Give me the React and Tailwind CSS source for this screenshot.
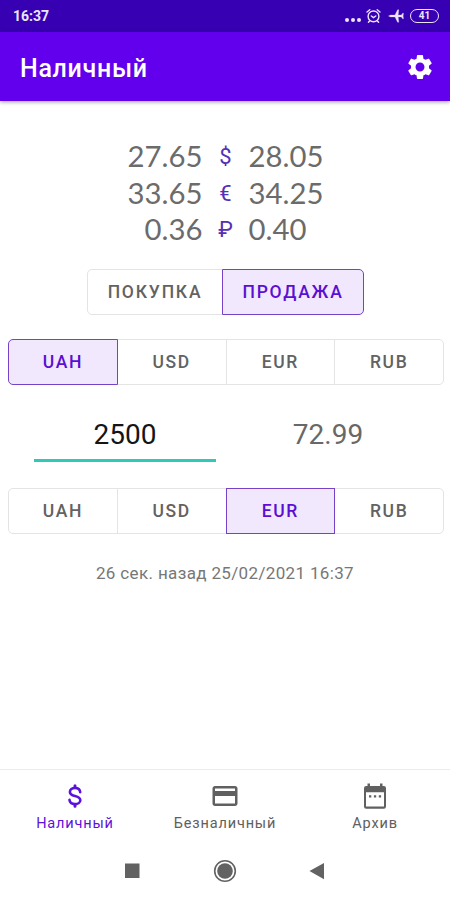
import { clsx } from 'clsx';
import { MdSettings, MdCreditCard } from 'react-icons/md';

const rates = [
  { buy: '27.65', sign: '$', sell: '28.05' },
  { buy: '33.65', sign: '€', sell: '34.25' },
  { buy: '0.36', sign: '₽', sell: '0.40' },
];

const currencies = ['UAH', 'USD', 'EUR', 'RUB'];

function AlarmIcon() {
  return (
    <svg width="15" height="16" viewBox="0 0 15 16" fill="none" stroke="currentColor" strokeWidth="1.4" strokeLinecap="round">
      <circle cx="7.5" cy="8.4" r="5.4" />
      <path d="M1 4 3.8 1.8M14 4 11.2 1.8M5.3 8l2.2 1.6L9.8 8M3.4 13.2l-1 1.1M11.6 13.2l1 1.1" />
    </svg>
  );
}

function PlaneIcon() {
  return (
    <svg width="16" height="14" viewBox="0 0 16 14" fill="currentColor" className="mr-[6px] ml-[7px]">
      <path
        d="M.5 7 2.500 6.100H7L9.600.8h1.200L10.200 6.100h3.200L14.700 4.200h.8L15.100 7l.4 2.800h-.8L13.400 7.900h-3.200l.6 5.300H9.600L7 7.900H2.500Z"
        stroke="currentColor"
        strokeWidth="0.3"
      />
    </svg>
  );
}

function DollarIcon() {
  return (
    <svg width="24" height="24" viewBox="0 0 24 24" fill="none" stroke="currentColor" strokeWidth="2.6" strokeLinecap="round" strokeLinejoin="round">
      <path d="M17.2 8.1C17 5.6 15 4 12 4S6.9 5.6 6.9 7.9C6.9 10.3 8.8 11.2 12 12c3.5.9 5.3 1.9 5.3 4.2 0 2.3-2.2 3.9-5.3 3.9s-5.3-1.7-5.5-4.2" />
      <path d="M12 1.8v1.7M12 20.5v1.7" strokeWidth="3" />
    </svg>
  );
}

function CalendarIcon() {
  return (
    <svg width="24" height="26" viewBox="0 0 24 26" fill="currentColor">
      <path fillRule="evenodd" d="M4.500.5H7V3h10V.5h2.500V3h1.200A2.200 2.200 0 0 1 23 5.200v18.300a2.200 2.200 0 0 1-2.200 2.200H3.200A2.200 2.200 0 0 1 1 23.500V5.200A2.200 2.200 0 0 1 3.200 3h1.300ZM3 9.300v14.200h18V9.300Z" />
      <path d="M6 12.200h2.300v2.300H6zM10.900 12.200h2.300v2.300h-2.300zM15.800 12.200h2.300v2.300h-2.300z" />
    </svg>
  );
}

function ToggleGroup({ items, active, className, itemClass }) {
  return (
    <div className={clsx('flex h-[46px]', className)}>
      {items.map((item, i) => (
        <button
          key={item}
          className={clsx(
            'relative flex items-center justify-center border pt-[3px] text-[17.5px] leading-none font-medium',
            itemClass,
            i > 0 && '-ml-px',
            i === 0 && 'rounded-l-[5px]',
            i === items.length - 1 && 'rounded-r-[5px]',
            item === active
              ? 'z-10 border-[#7443c8] bg-[#f1e8fd] text-[#5a0fd2]'
              : 'border-[#e4e4e4] text-[#626262]'
          )}
        >
          {item}
        </button>
      ))}
    </div>
  );
}

function NavItem({ icon, label, active }) {
  return (
    <button className={clsx('flex flex-1 flex-col items-center', active ? 'text-[#5a12dc]' : 'text-[#606060]')}>
      <span className="flex h-7 items-center justify-center">{icon}</span>
      <span className="mt-[5px] text-[14.5px] leading-[18px] tracking-[0.85px]">{label}</span>
    </button>
  );
}

export default function App() {
  return (
    <div className="flex h-[900px] w-[450px] flex-col overflow-hidden bg-white font-['Roboto',sans-serif]">
      {/* Status bar */}
      <div className="flex h-8 shrink-0 items-center justify-between bg-[#3700b3] pr-[11px] pl-[13px] text-[#ece5fa]">
        <span className="pt-px text-[14px] font-bold">16:37</span>
        <div className="flex items-center">
          <div className="mt-2 mr-[5px] flex gap-[2px]">
            <i className="size-[4px] rounded-full bg-current" />
            <i className="size-[4px] rounded-full bg-current" />
            <i className="size-[4px] rounded-full bg-current" />
          </div>
          <AlarmIcon />
          <PlaneIcon />
          <span className="flex h-[14px] w-[29px] items-center justify-center rounded-full border-[1.5px] border-current text-[10px] leading-none font-bold">
            41
          </span>
        </div>
      </div>

      {/* App bar */}
      <header className="z-10 flex h-[69px] shrink-0 items-center justify-between bg-[#6200ee] pr-[15px] pl-5 text-white shadow-[0_1px_4px_rgba(0,0,0,0.4)]">
        <h1 className="pt-[3px] text-[25px] leading-none font-medium tracking-[0.7px]">Наличный</h1>
        <MdSettings size={30} />
      </header>

      <main className="flex flex-1 flex-col">
        {/* Exchange rates */}
        <div className="mt-[36px] font-['Lato',sans-serif] text-[29.3px] leading-9 text-[#6b6b6b]">
          {rates.map((rate) => (
            <div key={rate.sign} className="grid h-[36.5px] grid-cols-[202.5px_46px_1fr] items-center">
              <span className="text-right">{rate.buy}</span>
              <span className="pt-0.5 text-center font-['Roboto',sans-serif] text-[22px] text-[#5530b5]">{rate.sign}</span>
              <span>{rate.sell}</span>
            </div>
          ))}
        </div>

        <ToggleGroup
          items={['ПОКУПКА', 'ПРОДАЖА']}
          active="ПРОДАЖА"
          className="mt-[22px] ml-[87px] w-[277px]"
          itemClass="tracking-[1.8px] first:w-[136px] last:w-[142px]"
        />
        <ToggleGroup items={currencies} active="UAH" className="mt-6 mr-1.5 ml-2" itemClass="flex-1 tracking-[1.65px]" />

        {/* Amounts */}
        <div className="mt-[25px] grid h-[52px] grid-cols-[34px_182px_22px_180px] text-center text-[28px] leading-[49px]">
          <div className="col-start-2 border-b-[3px] border-[#2fc9b8] text-[#151515]">2500</div>
          <div className="col-start-4 text-[#686868]">72.99</div>
        </div>

        <ToggleGroup items={currencies} active="EUR" className="mt-[26px] mr-1.5 ml-2" itemClass="flex-1 tracking-[1.65px]" />

        <p className="mt-[29px] text-center text-[17px] leading-5 tracking-[0.35px] text-[#777]">26 сек. назад 25/02/2021 16:37</p>
      </main>

      {/* Bottom navigation */}
      <nav className="flex h-[73px] shrink-0 border-t border-[#ececec] pt-3">
        <NavItem active label="Наличный" icon={<DollarIcon />} />
        <NavItem label="Безналичный" icon={<MdCreditCard size={30} />} />
        <NavItem label="Архив" icon={<CalendarIcon />} />
      </nav>

      {/* System buttons */}
      <div className="flex h-[58px] shrink-0 items-center text-[#626262]">
        <svg width="450" height="58" viewBox="0 0 450 58" fill="currentColor">
          <rect x="125" y="21.5" width="14.5" height="14.5" />
          <circle cx="225" cy="29" r="7.8" />
          <circle cx="225" cy="29" r="10.3" fill="none" stroke="currentColor" strokeWidth="1.6" />
          <path d="M309.5 29 324 21v16.2Z" />
        </svg>
      </div>
    </div>
  );
}
